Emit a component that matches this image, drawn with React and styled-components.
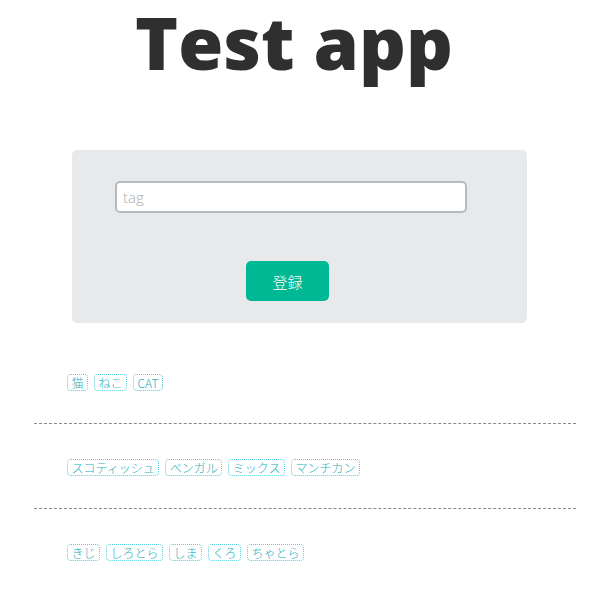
import React, { useState } from "react";
import styled, { createGlobalStyle } from "styled-components";

const GlobalStyle = createGlobalStyle`
  html, body {
    margin: 0;
    padding: 0;
    background: #fff;
  }
  body {
    font-family: "Lato", "Noto Sans CJK JP", sans-serif;
    color: #333;
  }
`;

const Page = styled.div`
  width: 608px;
  display: flex;
  flex-direction: column;
  align-items: flex-start;
`;

const Title = styled.h1`
  align-self: stretch;
  margin: 0;
  padding-right: 20px;
  text-align: center;
  font-family: "Open Sans", sans-serif;
  font-weight: 800;
  font-size: 73px;
  line-height: 84px;
  color: #2f2f2f;
`;

const FormCard = styled.form`
  margin: 66px 0 0 72px;
  width: 455px;
  height: 173px;
  box-sizing: border-box;
  background: #e8e9eb;
  border-radius: 5px;
  padding: 31px 0 0 43px;
  display: flex;
  flex-direction: column;
`;

const TagInput = styled.input`
  width: 352px;
  height: 32px;
  box-sizing: border-box;
  border: 2px solid #b7bbbe;
  border-radius: 5px;
  background: #fff;
  padding: 0 6px;
  font-family: "Open Sans", sans-serif;
  font-weight: 300;
  font-size: 15px;
  color: #333;
  outline: none;

  &::placeholder {
    color: #ababab;
  }
`;

const SubmitButton = styled.button`
  margin: 48px 0 0 131px;
  width: 83px;
  height: 40px;
  border: none;
  border-radius: 5px;
  background: #00b894;
  color: #fff;
  font-family: "Noto Sans CJK JP", sans-serif;
  font-weight: 300;
  font-size: 15px;
  cursor: pointer;
`;

const List = styled.ul`
  list-style: none;
  margin: 16px 0 0 34px;
  padding: 0;
  width: 542px;
`;

const Item = styled.li`
  height: 85px;
  box-sizing: border-box;
  padding: 35px 0 0 33px;
  border-bottom: ${(p) => (p.$last ? "none" : "1px dashed #888")};
  display: flex;
  align-items: flex-start;
  gap: 6px;
`;

const Tag = styled.span`
  display: inline-block;
  height: 17px;
  box-sizing: border-box;
  padding: 0 3.5px;
  border: 1px dotted #4fd0dc;
  border-radius: 4px;
  font-family: "Noto Sans CJK JP", sans-serif;
  font-weight: 300;
  font-size: 12px;
  line-height: 15px;
  color: #27afbd;
`;

const initialGroups = [
  ["猫", "ねこ", "CAT"],
  ["スコティッシュ", "ベンガル", "ミックス", "マンチカン"],
  ["きじ", "しろとら", "しま", "くろ", "ちゃとら"],
];

const App = () => {
  const [groups, setGroups] = useState(initialGroups);
  const [value, setValue] = useState("");

  const handleSubmit = (e) => {
    e.preventDefault();
    const tags = value.split(/[\s,]+/).filter(Boolean);
    if (tags.length) setGroups([...groups, tags]);
    setValue("");
  };

  return (
    <Page>
      <GlobalStyle />
      <Title>Test app</Title>
      <FormCard onSubmit={handleSubmit}>
        <TagInput
          placeholder="tag"
          value={value}
          onChange={(e) => setValue(e.target.value)}
        />
        <SubmitButton type="submit">登録</SubmitButton>
      </FormCard>
      <List>
        {groups.map((tags, i) => (
          <Item key={i} $last={i === groups.length - 1}>
            {tags.map((t) => (
              <Tag key={t}>{t}</Tag>
            ))}
          </Item>
        ))}
      </List>
    </Page>
  );
};

export default App;
